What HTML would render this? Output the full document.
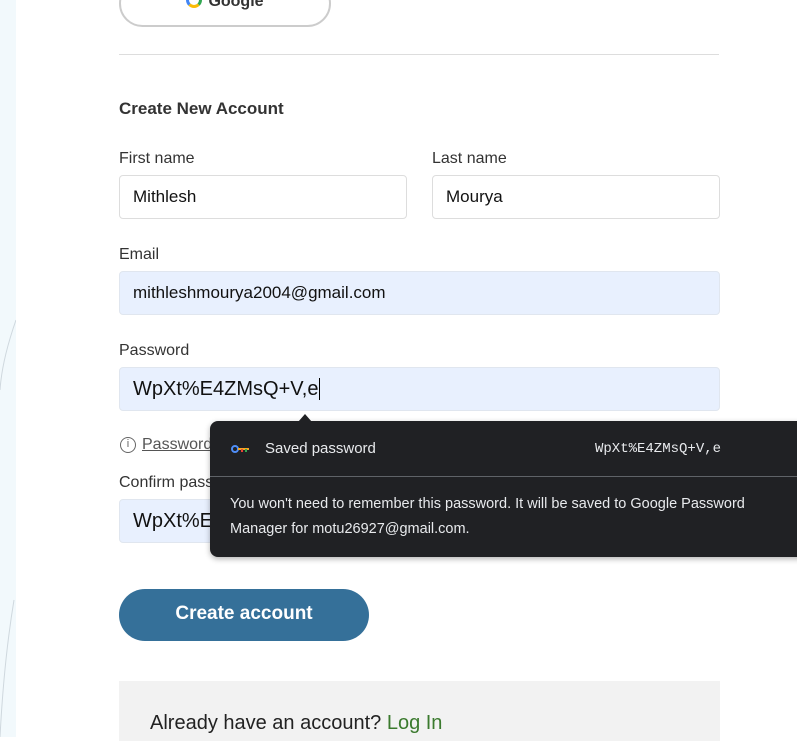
<!DOCTYPE html>
<html><head><style>
body{margin:0;width:797px;height:737px;overflow:hidden;background:#fff;font-family:"Liberation Sans",sans-serif;color:#222;position:relative}
.strip{position:absolute;left:0;top:0;width:16px;height:737px;background:#f2f9fc}
.abs{position:absolute}
.lbl{position:absolute;font-size:16px;color:#333}
.inp{position:absolute;border:1px solid #ddd;border-radius:4px;box-sizing:border-box;height:44px;padding-left:13px;line-height:42px;font-size:17px;color:#111}
.af{background:#e8f0fe;border-color:#e0e6ef}
</style></head><body>
<div class="strip"></div>
<svg class="abs" style="left:0;top:300px" width="16" height="437"><path d="M16 20 Q2 60 0 90" stroke="#cfd8de" fill="none"/><path d="M14 300 Q4 360 0 437" stroke="#cfd8de" fill="none"/></svg>
<div class="abs" style="left:119px;top:-20px;width:212px;height:47px;border:2px solid #ccc;border-radius:25px;box-sizing:border-box;text-align:center;font-weight:bold;font-size:16px;line-height:40px;color:#333">
<span style="display:inline-block;width:16px;height:16px;border-radius:50%;border:3px solid #4285f4;border-right-color:#34a853;border-bottom-color:#fbbc05;border-top-color:#ea4335;box-sizing:border-box;vertical-align:-2px;margin-right:6px"></span>Google</div>
<div class="abs" style="left:119px;top:54px;width:600px;height:1px;background:#ddd"></div>
<div class="abs" style="left:119px;top:99px;font-weight:bold;font-size:17px;color:#333">Create New Account</div>
<div class="lbl" style="left:119px;top:150px">First name</div>
<div class="lbl" style="left:432px;top:150px">Last name</div>
<div class="inp" style="left:119px;top:175px;width:288px">Mithlesh</div>
<div class="inp" style="left:432px;top:175px;width:288px">Mourya</div>
<div class="lbl" style="left:119px;top:246px">Email</div>
<div class="inp af" style="left:119px;top:271px;width:601px">mithleshmourya2004@gmail.com</div>
<div class="lbl" style="left:119px;top:342px">Password</div>
<div class="inp af" style="left:119px;top:367px;width:601px;font-size:20px">WpXt%E4ZMsQ+V,e<span style="border-left:1px solid #000;margin-left:1px"></span></div>
<div class="abs" style="left:120px;top:437px;width:16px;height:16px;border:1.5px solid #666;border-radius:50%;box-sizing:border-box;font-size:11px;text-align:center;line-height:13px;color:#666">i</div>
<div class="abs" style="left:142px;top:436px;font-size:16px;color:#555;text-decoration:underline">Password</div>
<div class="lbl" style="left:119px;top:474px">Confirm password</div>
<div class="inp af" style="left:119px;top:499px;width:601px;font-size:20px">WpXt%E4ZMsQ+V,e</div>
<div class="abs" style="left:210px;top:421px;width:600px;height:136px;background:#202124;border-radius:8px;box-shadow:0 2px 6px rgba(0,0,0,.3);color:#e8eaed">
<div class="abs" style="left:88px;top:-7px;width:0;height:0;border-left:7px solid transparent;border-right:7px solid transparent;border-bottom:8px solid #202124"></div>
<svg class="abs" style="left:21px;top:23px" width="20" height="10"><circle cx="4" cy="5" r="3" fill="none" stroke="#4f8ef7" stroke-width="2"/><rect x="7" y="4" width="11" height="2" fill="#f5a623"/><rect x="14" y="5" width="2" height="3" fill="#34a853"/><rect x="10" y="5" width="2" height="3" fill="#ea4335"/></svg>
<div class="abs" style="left:55px;top:19px;font-size:15px">Saved password</div>
<div class="abs" style="left:385px;top:20px;font-family:'Liberation Mono',monospace;font-size:14px">WpXt%E4ZMsQ+V,e</div>
<div class="abs" style="left:0;top:55px;width:600px;height:1px;background:#5f6368"></div>
<div class="abs" style="left:20px;top:71px;font-size:14.5px;line-height:25px;width:535px">You won't need to remember this password. It will be saved to Google Password Manager for motu26927@gmail.com.</div>
</div>
<div class="abs" style="left:119px;top:589px;width:250px;height:52px;background:#357099;border-radius:26px;color:#fff;font-weight:bold;font-size:19px;text-align:center;line-height:50px">Create account</div>
<div class="abs" style="left:119px;top:681px;width:601px;height:60px;background:#f2f2f2"></div>
<div class="abs" style="left:150px;top:712px;font-size:20px;color:#222">Already have an account? <span style="color:#3b7a2e">Log In</span></div>
</body></html>
